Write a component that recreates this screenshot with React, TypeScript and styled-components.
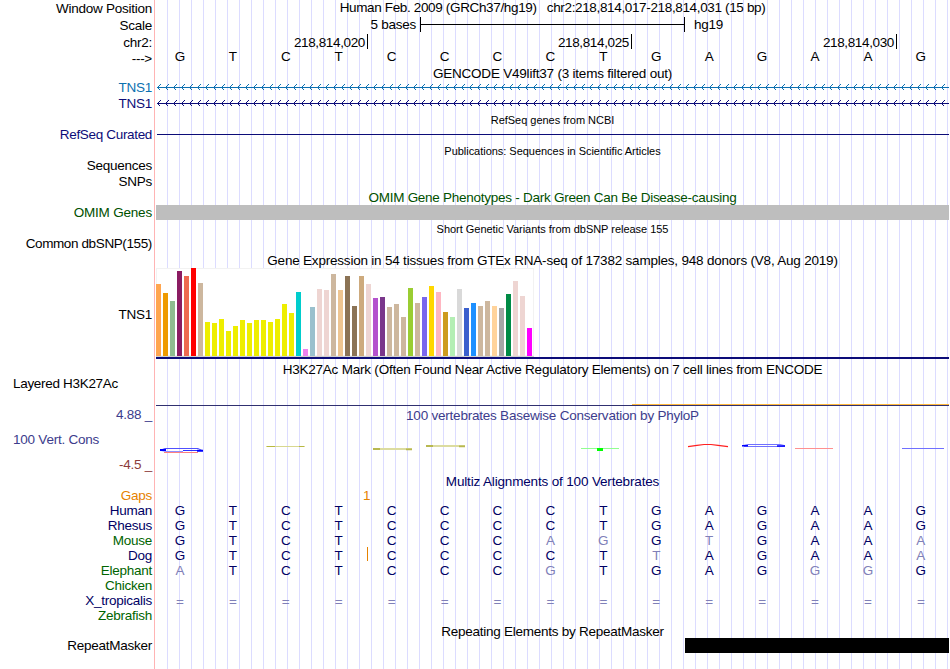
import React from 'react'
import styled, {createGlobalStyle} from 'styled-components'

const GlobalStyle = createGlobalStyle`
  body {
    margin: 0;
    background: #fff;
    overflow: hidden;
  }
`

const colors = {
  guide: '#dcdcff',
  edge: '#ffb4b4',
  navy: '#0c0c78',
  gencode: '#0c70b0',
  green: '#005000',
  species: '#000064',
  speciesAlt: '#006400',
  gap: '#e68200',
  mismatch: '#8080b8',
  cons: '#3c3c8c',
  consMin: '#8c3c3c',
}

// The default tracking is a little tight, rows adjust it with $spacing
const tracking = (spacing = 0) => `${(spacing - 0.26).toFixed(3)}px`

const Browser = styled.main`
  width: 949px;
  height: 669px;
  overflow: hidden;
  font-family: 'Liberation Sans', Arial, Helvetica, sans-serif;
  font-size: 13.5px;
  letter-spacing: ${tracking()};
  color: #000;
  white-space: pre;
  background-image: linear-gradient(
      to right,
      #fff 154px,
      ${colors.edge} 154px 155px,
      #fff 155px 167px,
      transparent 167px
    ),
    linear-gradient(to right, ${colors.guide} 1px, transparent 1px);
  background-size: 949px 100%, 12px 100%;
  background-position: 0 0, 11px 0;
  background-repeat: no-repeat, repeat;
`

const Row = styled.div<{$height: number}>`
  display: grid;
  grid-template-columns: 152px 793px;
  grid-template-rows: 100%;
  column-gap: 4px;
  height: ${({$height}) => $height}px;
`

const Label = styled.div<{$color?: string; $line?: number; $spacing?: number}>`
  color: ${({$color}) => $color || '#000'};
  line-height: ${({$line}) => $line || 15}px;
  letter-spacing: ${({$spacing}) => tracking($spacing)};
  text-align: right;
`

const LeftLabel = styled(Label)`
  text-align: left;
  padding-left: 13px;
`

const TrackTitle = styled.div<{
  $height: number
  $line?: number
  $color?: string
  $spacing?: number
}>`
  height: ${({$height}) => $height}px;
  line-height: ${({$height, $line}) => $line || $height}px;
  text-align: center;
  color: ${({$color}) => $color || '#000'};
  letter-spacing: ${({$spacing}) => tracking($spacing)};
`

const Title = styled(TrackTitle)`
  margin-left: 156px;
`

const SmallTitle = styled(Title)`
  font-size: 11px;
  letter-spacing: -0.03px;
`

const ScaleTrack = styled.div`
  display: flex;
  padding-top: 1px;
  line-height: 16px;
`

const ScaleText = styled.span`
  width: 260px;
  text-align: right;
`

const ScaleBar = styled.div`
  box-sizing: border-box;
  width: 265px;
  height: 15px;
  margin: 0 9px 0 4px;
  border: solid #000;
  border-width: 0 1px;
  background: linear-gradient(#000, #000) 0 7px / 100% 1px no-repeat;
`

const Ruler = styled.div`
  display: flex;
`

const Position = styled.div<{$width: number}>`
  box-sizing: border-box;
  width: ${({$width}) => $width}px;
  height: 15px;
  padding-right: 2px;
  border-right: 1px solid #000;
  line-height: 18px;
  letter-spacing: ${tracking(-0.1)};
  text-align: right;
`

const Bases = styled.div<{$line?: number}>`
  display: grid;
  grid-template-columns: repeat(15, 52.93px);
  margin-left: -2.5px;
  line-height: ${({$line}) => $line || 13}px;
  letter-spacing: 0;
  text-align: center;
  color: ${colors.species};
`

const RulerBases = styled(Bases)`
  color: #000;
`

const Base = styled.span<{$faded?: boolean}>`
  ${({$faded}) => $faded && `color: ${colors.mismatch};`}
`

const Insert = styled.i`
  position: absolute;
  left: 211px;
  top: -2px;
  width: 1px;
  height: 14px;
  background: ${colors.gap};
`

const Alignment = styled.div`
  position: relative;
`

const GapCount = styled.div`
  padding-left: 207px;
  line-height: 13px;
  color: ${colors.gap};
`

const Rule = styled.div`
  height: 1px;
  margin: 7px 0 0 1px;
  background: ${colors.navy};
`

const Block = styled.div<{$color: string; $start?: number}>`
  height: 15px;
  margin-left: ${({$start}) => $start || 0}px;
  background: ${({$color}) => $color};
`

const Expression = styled.div`
  border-bottom: 2px solid ${colors.navy};
`

const Chart = styled.div`
  box-sizing: border-box;
  display: flex;
  align-items: flex-end;
  gap: 2px;
  width: 378px;
  height: 89px;
  background: #fff;
  box-shadow: inset 0 0 0 1px #f2f2f2;
  border-bottom: 1px solid #d0d0d0;
`

const Bar = styled.div`
  width: 5px;
`

const Signal = styled.div`
  display: flex;
  flex-direction: column;
  align-items: flex-end;
  justify-content: flex-end;
  border-bottom: 1px solid #303070;
`

const OrangeSignal = styled.div`
  width: 317px;
  height: 1px;
  background: #ffb83c;
`

const ConsLabels = styled.div`
  display: flex;
  flex-direction: column;
  justify-content: space-between;
`

const Drawing = styled.svg`
  display: block;
`

const tan = '#cdb79e'
const yellow = '#eeee00'
const rose = '#eed5d2'

const tissues: [number, string][] = [
  [72, '#ffa54f'],
  [63, '#ee9a00'],
  [55, '#8fbc8f'],
  [85, '#8b1c62'],
  [80, '#ee6a50'],
  [88, '#ff0000'],
  [73, tan],
  [34, yellow],
  [33, yellow],
  [37, yellow],
  [25, yellow],
  [30, yellow],
  [36, yellow],
  [33, yellow],
  [36, yellow],
  [36, yellow],
  [34, yellow],
  [37, yellow],
  [52, yellow],
  [43, yellow],
  [64, '#00cdcd'],
  [7, '#ee82ee'],
  [49, '#9ac0cd'],
  [67, rose],
  [66, rose],
  [82, tan],
  [66, '#eec591'],
  [80, '#8b7355'],
  [50, '#8b7355'],
  [80, '#cdaa7d'],
  [72, rose],
  [58, '#b452cd'],
  [59, '#7a378b'],
  [49, tan],
  [52, tan],
  [39, tan],
  [68, '#9acd32'],
  [53, tan],
  [59, '#7a67ee'],
  [70, '#ffd700'],
  [64, '#ffb6c1'],
  [44, '#cd9b1d'],
  [39, '#b4eeb4'],
  [67, '#d9d9d9'],
  [48, '#3a5fcd'],
  [53, '#1e90ff'],
  [50, tan],
  [55, tan],
  [50, '#ffd39b'],
  [48, '#a6a6a6'],
  [62, '#008b45'],
  [75, rose],
  [60, rose],
  [28, '#ff00ff'],
]

const reference = 'GTCTCCCCTGAGAAG'

// Lower case letters differ from the human sequence
const species = [
  {name: 'Human', bases: reference},
  {name: 'Rhesus', bases: reference},
  {name: 'Mouse', bases: 'GTCTCCCagGtGAAa', alt: true},
  {name: 'Dog', bases: 'GTCTCCCCTtAGAAa', insert: true},
  {name: 'Elephant', bases: 'aTCTCCCgTGAGggG', alt: true},
  {name: 'Chicken', bases: '', alt: true},
  {name: 'X_tropicalis', bases: '===============', line: 15},
  {name: 'Zebrafish', bases: '', alt: true},
]

const Gene = ({color}: {color: string}) => (
  <Drawing
    width="793"
    height="15"
    fill="none"
    stroke={color}
    shapeRendering="crispEdges"
  >
    <path d="M1 7.5H793" />
    {Array.from({length: 99}, (_, i) => (
      <path key={i} d={`M${i * 8 + 4.5} 4.5l-3 3l3 3`} />
    ))}
  </Drawing>
)

const Conservation = () => (
  <Drawing width="793" height="50" fill="none">
    <path d="M8 29.5H42" stroke="#ff8080" />
    <path d="M4 27.3L9 25.5H42L46 27.5" stroke="#5050ff" />
    <path d="M5 27.5L10 28.5H27" stroke="#9090ff" />
    <path d="M27 27.5H47" stroke="#3030ff" />
    <path d="M4 27H10M41 27.7H47" stroke="#0000ff" strokeWidth="2" />
    <path d="M110 23.5H149" stroke="#d8d890" />
    <path d="M111 23.5H119M143 23.5H148" stroke="#b8b840" />
    <path d="M217 26H256" stroke="#dcdca0" strokeWidth="2" />
    <path d="M217 26H224M250 26.3H256" stroke="#b8b850" strokeWidth="1.8" />
    <path d="M270 23H309" stroke="#dcdca0" strokeWidth="2" />
    <path d="M270 23H277M303 23.3H309" stroke="#b8b850" strokeWidth="1.8" />
    <path d="M425 25.5H463" stroke="#90ff90" />
    <path d="M441 26.5H447" stroke="#00ff00" strokeWidth="3" />
    <path
      d="M532 23.7L541 22.4L548 21.5H555L562 22.4L572 23.7"
      stroke="#ff2020"
      strokeWidth="1.2"
    />
    <path
      d="M586 22.7L592 21.5H624L629 22.7M588 23.5H629"
      stroke="#7070ff"
    />
    <path d="M586 22.7H592M621 23H629" stroke="#0000ff" strokeWidth="1.6" />
    <path d="M639 25.5H677" stroke="#ff9090" />
    <path d="M746 25.5H788" stroke="#7070ff" />
  </Drawing>
)

const App = () => (
  <>
    <GlobalStyle />
    <Browser>
      <Row $height={16}>
        <Label $line={17}>Window Position</Label>
        <TrackTitle $height={15} $spacing={-0.09}>
          {'Human Feb. 2009 (GRCh37/hg19)   chr2:218,814,017-218,814,031 (15 bp)'}
        </TrackTitle>
      </Row>
      <Row $height={18}>
        <Label $line={19}>Scale</Label>
        <ScaleTrack>
          <ScaleText>5 bases</ScaleText>
          <ScaleBar />
          <span>hg19</span>
        </ScaleTrack>
      </Row>
      <Row $height={16}>
        <Label $line={18}>chr2:</Label>
        <Ruler>
          <Position $width={212}>218,814,020</Position>
          <Position $width={264}>218,814,025</Position>
          <Position $width={265}>218,814,030</Position>
        </Ruler>
      </Row>
      <Row $height={16}>
        <Label $line={17}>---&gt;</Label>
        <RulerBases $line={14}>
          {reference.split('').map((base, i) => (
            <Base key={i}>{base}</Base>
          ))}
        </RulerBases>
      </Row>
      <Title $height={14} $line={16} $spacing={0.05}>
        GENCODE V49lift37 (3 items filtered out)
      </Title>
      <Row $height={16}>
        <Label $color={colors.gencode}>TNS1</Label>
        <Gene color={colors.gencode} />
      </Row>
      <Row $height={15}>
        <Label $color={colors.navy}>TNS1</Label>
        <Gene color={colors.navy} />
      </Row>
      <SmallTitle $height={16} $line={18}>
        RefSeq genes from NCBI
      </SmallTitle>
      <Row $height={16}>
        <Label $color={colors.navy} $spacing={-0.07}>
          RefSeq Curated
        </Label>
        <Rule />
      </Row>
      <SmallTitle $height={16}>
        Publications: Sequences in Scientific Articles
      </SmallTitle>
      <Row $height={16}>
        <Label $line={13}>Sequences</Label>
      </Row>
      <Row $height={15}>
        <Label $line={13}>SNPs</Label>
      </Row>
      <Title $height={15} $color={colors.green}>
        OMIM Gene Phenotypes - Dark Green Can Be Disease-causing
      </Title>
      <Row $height={15}>
        <Label $color={colors.green} $spacing={0.07}>
          OMIM Genes
        </Label>
        <Block $color="#bebebe" />
      </Row>
      <SmallTitle $height={16} $line={18}>
        Short Genetic Variants from dbSNP release 155
      </SmallTitle>
      <Row $height={15}>
        <Label $spacing={-0.12}>Common dbSNP(155)</Label>
      </Row>
      <Title $height={17} $line={19} $spacing={0.055}>
        Gene Expression in 54 tissues from GTEx RNA-seq of 17382 samples, 948
        donors (V8, Aug 2019)
      </Title>
      <Row $height={91}>
        <Label $line={94}>TNS1</Label>
        <Expression>
          <Chart>
            {tissues.map(([height, color], i) => (
              <Bar key={i} style={{height, background: color}} />
            ))}
          </Chart>
        </Expression>
      </Row>
      <Title $height={18} $line={22} $spacing={0.045}>
        H3K27Ac Mark (Often Found Near Active Regulatory Elements) on 7 cell
        lines from ENCODE
      </Title>
      <Row $height={29}>
        <LeftLabel $line={14} $spacing={-0.05}>
          Layered H3K27Ac
        </LeftLabel>
        <Signal>
          <OrangeSignal />
        </Signal>
      </Row>
      <Row $height={17}>
        <Label $color={colors.cons} $line={18}>
          4.88 _
        </Label>
        <TrackTitle
          $height={17}
          $line={20}
          $color={colors.cons}
          $spacing={0.04}
        >
          100 vertebrates Basewise Conservation by PhyloP
        </TrackTitle>
      </Row>
      <Row $height={50}>
        <ConsLabels>
          <LeftLabel $color={colors.cons} $line={33} $spacing={0.03}>
            100 Vert. Cons
          </LeftLabel>
          <Label $color={colors.consMin} $line={17}>
            -4.5 _
          </Label>
        </ConsLabels>
        <Conservation />
      </Row>
      <Title $height={16} $line={18} $color={colors.species} $spacing={0.1}>
        Multiz Alignments of 100 Vertebrates
      </Title>
      <Row $height={15}>
        <Label $color={colors.gap} $line={13}>
          Gaps
        </Label>
        <GapCount>1</GapCount>
      </Row>
      {species.map(({name, bases, alt, insert, line}) => (
        <Row key={name} $height={15}>
          <Label
            $color={alt ? colors.speciesAlt : colors.species}
            $line={13}
          >
            {name}
          </Label>
          <Alignment>
            <Bases $line={line}>
              {bases.split('').map((base, i) => (
                <Base
                  key={i}
                  $faded={base === '=' || base !== base.toUpperCase()}
                >
                  {base.toUpperCase()}
                </Base>
              ))}
            </Bases>
            {insert && <Insert />}
          </Alignment>
        </Row>
      ))}
      <Title $height={14} $line={16}>
        Repeating Elements by RepeatMasker
      </Title>
      <Row $height={15}>
        <Label>RepeatMasker</Label>
        <Block $color="#000" $start={529} />
      </Row>
    </Browser>
  </>
)

export default App
